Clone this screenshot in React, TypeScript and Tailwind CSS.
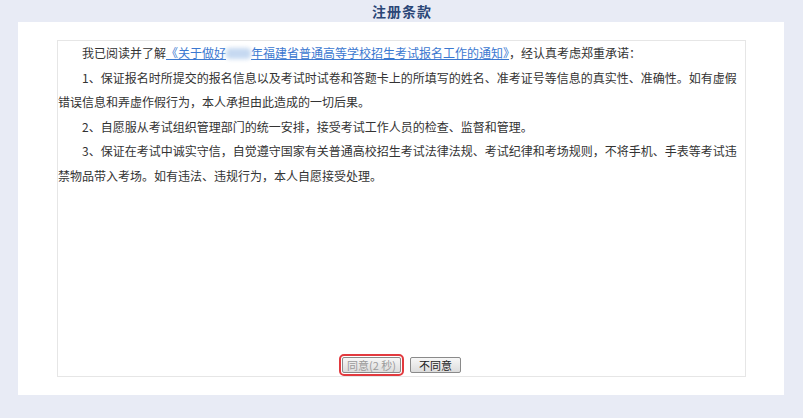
const cjk = { fontFamily: '"Noto Sans CJK SC", "Liberation Sans", sans-serif' };

function TermButton({ label, disabled, highlight }: { label: string; disabled?: boolean; highlight?: boolean }) {
  return (
    <button
      type="button"
      disabled={disabled}
      className={
        "h-[16px] px-[4px] text-[11px] leading-[14px] rounded-[2px] border border-[#8a8a8a] bg-gradient-to-b from-[#f7f7f7] to-[#dcdcdc] " +
        (disabled ? "text-[#9a9a9a] " : "text-[#222] px-[8px] ") +
        (highlight ? "outline-2 outline-offset-1 outline-[#e23a3f]" : "")
      }
      style={cjk}
    >
      {label}
    </button>
  );
}

export default function App() {
  return (
    <div className="w-[803px] h-[418px] bg-[#e8ebf5] flex flex-col" style={cjk}>
      {/* 标题 */}
      <div className="h-[22px] flex items-center justify-center">
        <h2 className="text-[14px] leading-[20px] font-bold text-[#2b4677] tracking-[1px] pl-[1px]">注册条款</h2>
      </div>

      {/* 白色面板 */}
      <div className="ml-[18px] w-[766px] h-[373px] bg-white pt-[18px] pl-[39px] pr-[38px]">
        <div className="w-[689px] h-[337px] border border-[#e6e6e6] flex flex-col">
          <div className="flex-1 text-[12px] leading-[24.6px] text-[#333] whitespace-nowrap">
            <p className="pl-[24px]">
              我已阅读并了解
              <a href="#" className="text-[#3b78d0] underline">
                《关于做好
                <span className="inline-block w-[25px] h-[11px] align-[-1px] rounded-[4px] bg-[#c6d9f1] blur-[2px]" />
                年福建省普通高等学校招生考试报名工作的通知》
              </a>
              ，经认真考虑郑重承诺：
            </p>
            <p>
              <span className="pl-[24px]">1、保证报名时所提交的报名信息以及考试时试卷和答题卡上的所填写的姓名、准考证号等信息的真实性、准确性。如有虚假</span>
              <br />
              错误信息和弄虚作假行为，本人承担由此造成的一切后果。
            </p>
            <p className="pl-[24px]">2、自愿服从考试组织管理部门的统一安排，接受考试工作人员的检查、监督和管理。</p>
            <p>
              <span className="pl-[24px]">3、保证在考试中诚实守信，自觉遵守国家有关普通高校招生考试法律法规、考试纪律和考场规则，不将手机、手表等考试违</span>
              <br />
              禁物品带入考场。如有违法、违规行为，本人自愿接受处理。
            </p>
          </div>
          <div className="flex justify-center gap-[9px] pb-[3px]">
            <TermButton label="同意(2 秒)" disabled highlight />
            <TermButton label="不同意" />
          </div>
        </div>
      </div>
    </div>
  );
}
